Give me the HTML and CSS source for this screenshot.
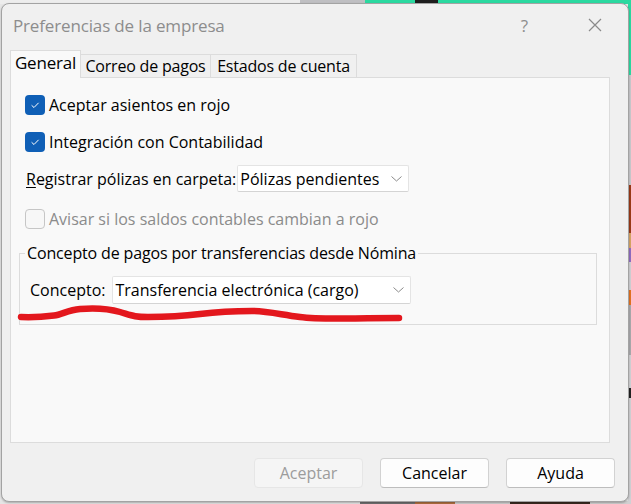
FILE: index.html
```html
<!DOCTYPE html>
<html lang="es">
<head>
<meta charset="utf-8">
<title>Preferencias de la empresa</title>
<link rel="stylesheet" href="styles.css">
</head>
<body>
<div class="window">
  <div class="titlebar">
    <span class="title">Preferencias de la empresa</span>
    <span class="help">?</span>
    <span class="close">
      <svg width="14" height="14" viewBox="0 0 14 14"><path d="M1 1 L13 13 M13 1 L1 13" stroke="#8a8a8a" stroke-width="1.2" fill="none"/></svg>
    </span>
  </div>
  <div class="tabs">
    <div class="tab active">General</div>
    <div class="tab">Correo de pagos</div>
    <div class="tab">Estados de cuenta</div>
  </div>
  <div class="panel">
    <div class="row row1">
      <span class="cb checked"><svg width="12" height="12" viewBox="0 0 12 12"><path d="M2.6 6.3 L5 8.5 L9.6 3.8" stroke="#fff" stroke-width="1" fill="none"/></svg></span>
      <span class="label">Aceptar asientos en rojo</span>
    </div>
    <div class="row row2">
      <span class="cb checked"><svg width="12" height="12" viewBox="0 0 12 12"><path d="M2.6 6.3 L5 8.5 L9.6 3.8" stroke="#fff" stroke-width="1" fill="none"/></svg></span>
      <span class="label">Integración con Contabilidad</span>
    </div>
    <div class="row row3">
      <span class="label plain"><u>R</u>egistrar pólizas en carpeta:</span>
      <div class="select sel1">
        <span class="sel-text">Pólizas pendientes</span>
        <svg class="chev" width="11" height="6" viewBox="0 0 11 6"><path d="M0.5 0.5 L5.5 5 L10.5 0.5" stroke="#8a8a8a" stroke-width="1" fill="none"/></svg>
      </div>
    </div>
    <div class="row row4">
      <span class="cb disabled"></span>
      <span class="label dis">Avisar si los saldos contables cambian a rojo</span>
    </div>
    <fieldset class="group">
      <legend>Concepto de pagos por transferencias desde Nómina</legend>
      <div class="concept-row">
        <span class="label plain">Concepto:</span>
        <div class="select sel2">
          <span class="sel-text">Transferencia electrónica (cargo)</span>
          <svg class="chev" width="11" height="6" viewBox="0 0 11 6"><path d="M0.5 0.5 L5.5 5 L10.5 0.5" stroke="#8a8a8a" stroke-width="1" fill="none"/></svg>
        </div>
      </div>
    </fieldset>
    <svg class="scribble" width="400" height="30" viewBox="0 0 400 30">
      <path d="M5,17 C18,17.5 30,16.5 38,15.5 S52,10 64,9 S92,8.5 104,12 S118,17 132,17 S168,16 184,14 S222,11 236,11 S262,14 284,17 S330,18 383,18" stroke="#e3171d" stroke-width="6.5" stroke-linecap="round" stroke-linejoin="round" fill="none"/>
    </svg>
  </div>
  <div class="buttons">
    <div class="btn disabled">Aceptar</div>
    <div class="btn">Cancelar</div>
    <div class="btn">Ayuda</div>
  </div>
</div>
</body>
</html>
```

FILE: styles.css
```css
* { box-sizing: border-box; }

html, body {
  margin: 0;
  width: 631px;
  height: 504px;
  overflow: hidden;
}

body {
  font-family: "Open Sans", "Noto Sans", sans-serif;
  background:
    linear-gradient(to right, #ededed 0 300px, #bfbfc2 300px 365px, #2bd9a0 365px 415px, #1e1e1e 415px 438px, #2bd9a0 438px) top left / 100% 4px no-repeat,
    linear-gradient(to bottom, #2bd9a0 0 75px, #c8c8cb 75px 185px, #9a3a18 185px 233px, #d6a464 233px 248px, #8f6cc0 248px 262px, #cfcfd2 262px 290px, #e27222 290px 305px, #a8a8ab 305px 355px, #d0d0d3 355px 388px, #222 388px 398px, #d0d0d3 398px) top right / 3px 100% no-repeat,
    linear-gradient(to right, #e5e5e5 0 360px, #707070 360px 415px, #b07040 415px 455px, #d0d0d0 455px 510px, #3a2a20 510px 590px, #d0d0d0 590px) bottom left / 100% 3px no-repeat,
    #e6e6e6;
}

.window {
  margin: 3px 2px 0 1px;
  height: 499px;
  border: 1px solid #a3a3a3;
  border-radius: 8px;
  background: #f0f0f0;
  display: flex;
  flex-direction: column;
  box-shadow: 0 1px 2px rgba(0,0,0,0.25);
}

.titlebar {
  height: 46px;
  display: flex;
  align-items: center;
  padding: 0 0 4px 11px;
  flex: none;
}

.title {
  font-size: 17px;
  color: #8d8d8d;
  flex: 1;
  letter-spacing: -0.15px;
}

.help {
  font-size: 17px;
  color: #8d8d8d;
  margin-right: 60px;
}

.close {
  display: flex;
  margin-right: 26px;
}

.tabs {
  display: flex;
  align-items: flex-end;
  height: 27px;
  margin-left: 8px;
  flex: none;
  position: relative;
  z-index: 1;
}

.tab {
  height: 23px;
  border: 1px solid #dcdcdc;
  border-bottom: none;
  background: #f0f0f0;
  font-size: 16px;
  color: #000;
  display: flex;
  align-items: center;
  justify-content: center;
  margin-left: -1px;
  letter-spacing: -0.2px;
}

.tab:nth-child(2) { width: 131px; }
.tab:nth-child(3) { width: 147px; }

.tab.active {
  width: 71px;
  margin-left: 0;
  height: 28px;
  margin-bottom: -1px;
  background: #f9f9f9;
  font-size: 17px;
  padding-bottom: 4px;
}

.panel {
  height: 366px;
  margin: 0 18px 0 8px;
  border: 1px solid #dcdcdc;
  background: #f9f9f9;
  padding: 17px 12px 0 8px;
  flex: none;
  position: relative;
}

.row {
  display: flex;
  align-items: center;
  margin-left: 6px;
  font-size: 16px;
  color: #000;
}

.row1 { height: 20px; }
.row2 { height: 20px; margin-top: 17px; }
.row3 { height: 27px; margin-top: 13px; margin-left: 7px; }
.row4 { height: 20px; margin-top: 17px; }

.cb {
  width: 20px;
  height: 20px;
  border-radius: 4px;
  flex: none;
  display: flex;
  align-items: center;
  justify-content: center;
  margin-right: 4px;
}

.cb.checked { background: #0f5fb6; }
.cb.disabled { border: 1px solid #c6c6c6; background: #f7f7f7; }

.label { white-space: nowrap; }
.label u { text-decoration-thickness: 1px; text-underline-offset: 2px; }
.label.dis { color: #8b8b8b; }

.select {
  background: #fff;
  border: 1px solid #e4e4e4;
  border-bottom-color: #d4d4d4;
  border-radius: 2px;
  display: flex;
  align-items: center;
  padding-left: 2px;
}

.sel1 { width: 172px; height: 27px; margin-left: 1px; }
.sel2 { width: 299px; height: 28px; margin-left: 7px; }

.sel-text { flex: 1; white-space: nowrap; }
.chev { margin-right: 6px; flex: none; }

.group {
  margin: 13px 0 0 0;
  border: 1px solid #dcdcdc;
  padding: 0;
  height: 83px;
  font-size: 16px;
}

.group legend {
  margin-left: 5px;
  padding: 0 2px;
  font-size: 16px;
  letter-spacing: -0.15px;
  color: #000;
}

.concept-row {
  display: flex;
  align-items: center;
  margin: 12px 0 0 10px;
}

.scribble {
  position: absolute;
  left: 5px;
  top: 222px;
}

.buttons {
  display: flex;
  justify-content: flex-end;
  gap: 17px;
  margin: 15px 13px 0 0;
}

.btn {
  width: 109px;
  height: 30px;
  border: 1px solid #d2d2d2;
  border-bottom-color: #bdbdbd;
  border-radius: 4px;
  background: #fdfdfd;
  font-size: 16px;
  display: flex;
  align-items: center;
  justify-content: center;
  color: #000;
}

.btn.disabled {
  background: #f5f5f5;
  border-color: #e6e6e6;
  color: #9c9c9c;
}
```
